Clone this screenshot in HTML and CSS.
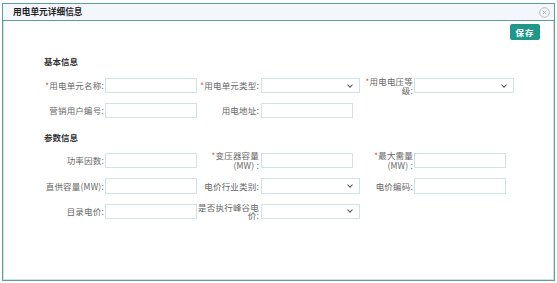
FILE: index.html
```html
<!DOCTYPE html>
<html lang="zh-CN">
<head>
  <meta charset="UTF-8" />
  <title>用电单元详细信息</title>
  <link rel="stylesheet" href="styles.css">
</head>
<body>

<div class="panel">
  <div class="panel-header">
    <span class="panel-title">用电单元详细信息</span>
    <span class="panel-close">
      <svg width="11" height="11" viewBox="0 0 11 11">
        <circle cx="5.5" cy="5.5" r="4.8" fill="none" stroke="#b4b4b4" stroke-width="0.9"/>
        <path d="M3.7 3.7 L7.3 7.3 M7.3 3.7 L3.7 7.3" stroke="#b4b4b4" stroke-width="0.9"/>
      </svg>
    </span>
  </div>

  <div class="panel-body">
    <div class="toolbar">
      <button class="save-btn">保存</button>
    </div>

    <!-- 基本信息 -->
    <h4 class="section-title">基本信息</h4>
    <div class="form-grid">
      <label class="field-label"><span class="req">*</span>用电单元名称:</label>
      <input class="text-input" type="text">
      <label class="field-label"><span class="req">*</span>用电单元类型:</label>
      <div class="select-wrap"><select class="select-input"></select></div>
      <label class="field-label"><span class="req">*</span>用电电压等级:</label>
      <div class="select-wrap"><select class="select-input"></select></div>

      <label class="field-label">营销用户编号:</label>
      <input class="text-input" type="text">
      <label class="field-label">用电地址:</label>
      <input class="text-input" type="text">
    </div>

    <!-- 参数信息 -->
    <h4 class="section-title second">参数信息</h4>
    <div class="form-grid loose">
      <label class="field-label">功率因数:</label>
      <input class="text-input" type="text">
      <label class="field-label"><span class="req">*</span>变压器容量 (MW) :</label>
      <input class="text-input" type="text">
      <label class="field-label"><span class="req">*</span>最大需量 (MW) :</label>
      <input class="text-input" type="text">

      <label class="field-label">直供容量(MW):</label>
      <input class="text-input" type="text">
      <label class="field-label">电价行业类别:</label>
      <div class="select-wrap"><select class="select-input"></select></div>
      <label class="field-label">电价编码:</label>
      <input class="text-input" type="text">

      <label class="field-label">目录电价:</label>
      <input class="text-input" type="text">
      <label class="field-label">是否执行峰谷电价:</label>
      <div class="select-wrap"><select class="select-input"></select></div>
    </div>
  </div>
</div>

</body>
</html>
```

FILE: styles.css
```css
body {
  font-family: "Noto Sans CJK SC", "Noto Sans", sans-serif;
  background: #fff;
  margin: 0;
  padding: 0;
}
.panel {
  box-sizing: border-box;
  margin: 3px 2px 0 2px;
  width: 553px;
  height: 278px;
  border: 1px solid #5e9e98;
  box-shadow: inset 1px 0 0 #cfe3e1, inset -1px 0 0 #cfe3e1, inset 0 -1px 0 #cfe3e1;
  background: #fff;
}
.panel-header {
  height: 16px;
  display: flex;
  align-items: center;
  justify-content: space-between;
  background: #f3f7fc;
  border-bottom: 1px solid #5e9e98;
  padding: 0 4px 0 10px;
}
.panel-title {
  font-size: 8.7px;
  font-weight: bold;
  color: #222;
  line-height: 16px;
}
.panel-close {
  display: flex;
  margin-top: 1px;
}
.panel-body {
  padding: 3px 14px 0 37px;
}
.toolbar {
  display: flex;
  justify-content: flex-end;
}
.save-btn {
  width: 30px;
  height: 16px;
  padding: 0;
  border: none;
  border-radius: 2px;
  background: #1f978a;
  color: #fff;
  font-family: inherit;
  font-size: 8.5px;
  font-weight: bold;
  letter-spacing: 1px;
  line-height: 16px;
  cursor: pointer;
}
.section-title {
  margin: 15px 0 11px 4px;
  font-size: 8.5px;
  font-weight: bold;
  color: #333;
  line-height: 12px;
}
.section-title.second {
  margin-top: 13px;
  margin-bottom: 10px;
}
.form-grid {
  display: grid;
  grid-template-columns: 65px 92px 64px 99px 54px 100px;
  grid-auto-rows: 15px;
  row-gap: 9.5px;
  align-items: center;
}
.form-grid.loose {
  grid-auto-rows: 15.5px;
  row-gap: 10px;
}
.field-label {
  text-align: right;
  font-size: 8.5px;
  line-height: 8.5px;
  letter-spacing: 0.2px;
  color: #666;
  padding-right: 1px;
  white-space: normal;
}
.form-grid .field-label:nth-child(6n+3) {
  padding-right: 2px;
}
.req {
  color: #e0393e;
  font-size: 8px;
}
.text-input,
.select-input {
  box-sizing: border-box;
  display: block;
  height: 100%;
  border: 1px solid #d3e3e5;
  background: #fff;
  margin: 0;
  padding: 0 3px;
  font-size: 8px;
  outline: none;
  border-radius: 0;
}
.text-input {
  width: 92px;
}
.select-wrap {
  position: relative;
  height: 100%;
}
.select-input {
  width: 100%;
  appearance: none;
  -webkit-appearance: none;
}
.select-wrap::after {
  content: "";
  position: absolute;
  right: 8px;
  top: 4.5px;
  width: 3px;
  height: 3px;
  border-right: 1.2px solid #555;
  border-bottom: 1.2px solid #555;
  transform: rotate(45deg);
  pointer-events: none;
}
```
